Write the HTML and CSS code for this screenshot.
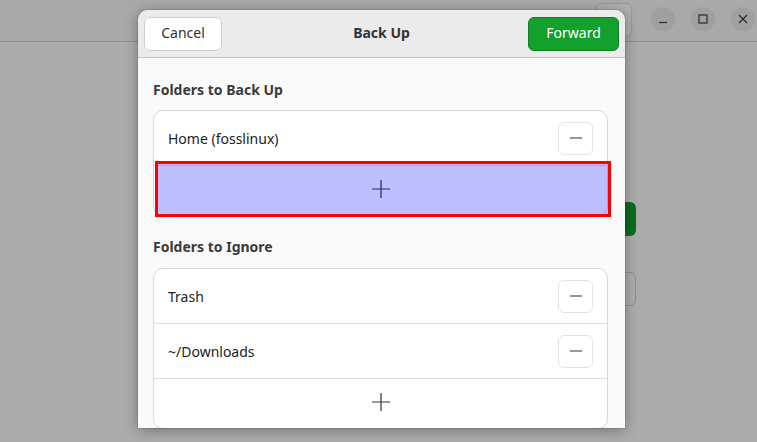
FILE: index.html
```html
<!DOCTYPE html>
<html>
<head>
<meta charset="utf-8">
<link rel="stylesheet" href="styles.css">
</head>
<body>
<div class="bg-window">
  <div class="bg-header">
    <div class="bg-btn"></div>
    <div class="controls">
      <span class="ctl"><svg width="10" height="10" viewBox="0 0 10 10"><path d="M1 8.5h8" stroke="#2a2a2a" stroke-width="1.2"/></svg></span>
      <span class="ctl"><svg width="10" height="10" viewBox="0 0 10 10"><rect x="1" y="1" width="8" height="8" fill="none" stroke="#2a2a2a" stroke-width="1.2"/></svg></span>
      <span class="ctl"><svg width="10" height="10" viewBox="0 0 10 10"><path d="M1 1L9 9M9 1L1 9" stroke="#2a2a2a" stroke-width="1.2"/></svg></span>
    </div>
  </div>
  <div class="bg-body">
    <div class="bg-green"></div>
    <div class="bg-outline"></div>
  </div>
</div>

<div class="dialog">
  <div class="dlg-header">
    <button class="btn btn-cancel">Cancel</button>
    <div class="dlg-title">Back Up</div>
    <button class="btn btn-forward">Forward</button>
  </div>
  <div class="dlg-content">
    <div class="section-title">Folders to Back Up</div>
    <div class="list-wrap">
      <div class="list">
        <div class="row">
          <span class="row-label">Home (fosslinux)</span>
          <span class="minus-btn"><svg width="12" height="2" viewBox="0 0 12 2"><path d="M0 1h12" stroke="#333" stroke-width="1"/></svg></span>
        </div>
        <div class="row add-row">
          <svg width="18" height="18" viewBox="0 0 18 18"><path d="M9 0v18M0 9h18" stroke="#333" stroke-width="1.2"/></svg>
        </div>
      </div>
      <div class="highlight"></div>
    </div>
    <div class="section-title second">Folders to Ignore</div>
    <div class="list">
      <div class="row">
        <span class="row-label">Trash</span>
        <span class="minus-btn"><svg width="12" height="2" viewBox="0 0 12 2"><path d="M0 1h12" stroke="#333" stroke-width="1"/></svg></span>
      </div>
      <div class="row">
        <span class="row-label">~/Downloads</span>
        <span class="minus-btn"><svg width="12" height="2" viewBox="0 0 12 2"><path d="M0 1h12" stroke="#333" stroke-width="1"/></svg></span>
      </div>
      <div class="row add-row">
        <svg width="18" height="18" viewBox="0 0 18 18"><path d="M9 0v18M0 9h18" stroke="#333" stroke-width="1.2"/></svg>
      </div>
    </div>
  </div>
</div>
</body>
</html>
```
FILE: styles.css
```css
html, body {
  margin: 0;
  padding: 0;
}
body {
  width: 757px;
  height: 442px;
  overflow: hidden;
  background: #acacac;
  font-family: "Noto Sans", "DejaVu Sans", sans-serif;
  color: #2f2f2f;
  position: relative;
}
.bg-header {
  height: 42px;
  border-bottom: 1px solid #8e8e8e;
  background: #a9a9a9;
  display: flex;
  justify-content: flex-end;
  align-items: center;
  padding-right: 2px;
  box-sizing: border-box;
}
.bg-btn {
  width: 34px;
  height: 32px;
  border: 1px solid #999;
  border-radius: 6px;
  background: #b0b0b0;
  align-self: flex-start;
  margin-top: 3px;
  margin-right: 19px;
}
.controls {
  display: flex;
  gap: 16px;
  margin-top: -4px;
}
.ctl {
  width: 24px;
  height: 24px;
  border-radius: 50%;
  background: #a0a0a0;
  display: flex;
  align-items: center;
  justify-content: center;
}
.bg-body {
  display: flex;
  flex-direction: column;
  align-items: flex-end;
  padding-right: 121px;
  padding-top: 160px;
  gap: 36px;
}
.bg-green {
  width: 76px;
  height: 34px;
  border-radius: 6px;
  background: #0c6d1e;
}
.bg-outline {
  width: 76px;
  height: 32px;
  border-radius: 6px;
  border: 1px solid #8f8f8f;
  background: #acacac;
}
.dialog {
  position: absolute;
  left: 138px;
  top: 10px;
  width: 487px;
  height: 418px;
  background: #fafafa;
  border-radius: 10px 10px 0 0;
  box-shadow: 0 2px 14px rgba(0,0,0,0.35), 0 0 0 1px rgba(0,0,0,0.08);
  overflow: hidden;
}
.dlg-header {
  height: 47px;
  background: #ebebeb;
  border-bottom: 1px solid #c4c4c4;
  display: grid;
  grid-template-columns: 1fr auto 1fr;
  align-items: center;
  padding: 0 6px;
}
.btn {
  font-family: inherit;
  font-size: 14px;
  height: 34px;
  border-radius: 6px;
  padding: 0 0 2px 0;
}
.btn-cancel {
  width: 78px;
  background: #ffffff;
  border: 1px solid #cdcdcd;
  color: #2f2f2f;
  justify-self: start;
}
.btn-forward {
  width: 91px;
  background: #13a02d;
  border: 1px solid #0f7f23;
  color: #ffffff;
  justify-self: end;
}
.dlg-title {
  font-weight: bold;
  font-size: 14px;
  color: #333;
  margin-top: -2px;
}
.dlg-content {
  padding: 22px 17px 0 15px;
}
.section-title {
  font-weight: bold;
  font-size: 14px;
  line-height: 20px;
  color: #3a3a3a;
  margin-bottom: 10px;
}
.section-title.second {
  margin-top: 21px;
  margin-bottom: 11px;
}
.list-wrap {
  position: relative;
}
.list {
  background: #ffffff;
  border: 1px solid #d9d9d9;
  border-radius: 10px;
}
.row {
  height: 54px;
  display: flex;
  align-items: center;
  justify-content: space-between;
  padding: 0 14px 0 14px;
  border-bottom: 1px solid #dedede;
  font-size: 14px;
  color: #222;
}
.row.add-row {
  height: 45px;
  padding-bottom: 4px;
  border-bottom: none;
  justify-content: center;
}
.minus-btn {
  width: 33px;
  height: 31px;
  border: 1px solid #e3e3e3;
  border-radius: 6px;
  display: flex;
  align-items: center;
  justify-content: center;
}
.highlight {
  position: absolute;
  left: 2px;
  top: 51px;
  width: 450px;
  height: 50px;
  border: 3px solid #ff0000;
  background: rgba(0, 0, 255, 0.25);
}
```
